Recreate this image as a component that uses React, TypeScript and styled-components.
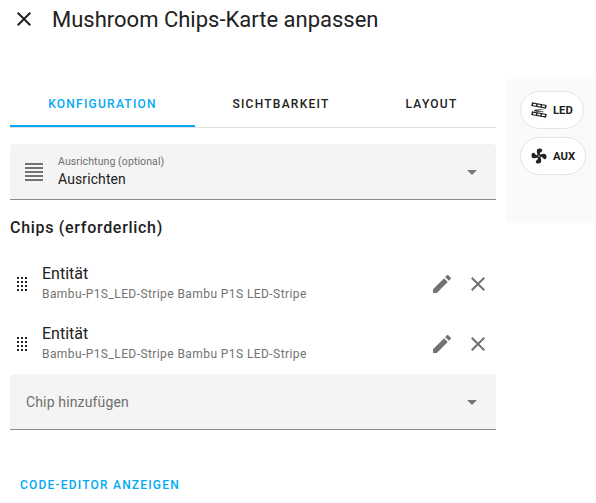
import styled, { createGlobalStyle } from 'styled-components';

const GlobalStyle = createGlobalStyle`
  html, body {
    margin: 0;
    padding: 0;
    background: #fff;
    overflow: hidden;
  }
  body {
    font-family: Roboto, "Liberation Sans", sans-serif;
    color: #212121;
  }
`;

const Dialog = styled.div`
  width: 596px;
  height: 503px;
  overflow: hidden;
`;

const Header = styled.header`
  display: flex;
  align-items: center;
  height: 38px;
  padding-left: 12px;
`;

const CloseButton = styled.div`
  display: flex;
  width: 24px;
  height: 24px;
  color: #212121;
`;

const Title = styled.h1`
  margin: 0 0 0 16px;
  font-size: 22px;
  font-weight: 400;
  color: #212121;
`;

const Content = styled.div`
  display: flex;
  align-items: flex-start;
  padding: 41px 0 0 10px;
`;

const Editor = styled.div`
  display: flex;
  flex-direction: column;
  width: 486px;
`;

const Tabs = styled.div`
  display: flex;
  height: 48px;
  border-bottom: 1px solid #e0e0e0;
`;

const Tab = styled.div<{ $active?: boolean; $width: number }>`
  display: flex;
  align-items: center;
  justify-content: center;
  box-sizing: border-box;
  width: ${(p) => p.$width}px;
  height: 48px;
  padding-top: 4px;
  font-size: 12px;
  font-weight: 500;
  letter-spacing: 1.25px;
  color: ${(p) => (p.$active ? '#03a9f4' : '#212121')};
  border-bottom: 2px solid ${(p) => (p.$active ? '#03a9f4' : 'transparent')};
`;

const SelectBox = styled.div<{ $top: number }>`
  display: flex;
  align-items: center;
  box-sizing: border-box;
  height: 56px;
  margin-top: ${(p) => p.$top}px;
  padding: 0 16px;
  background: #f4f4f4;
  border-bottom: 1px solid #8a8a8a;
  border-radius: 4px 4px 0 0;
`;

const LeadingIcon = styled.div`
  display: flex;
  width: 24px;
  height: 24px;
  margin: 0 12px 0 -4px;
  color: #727272;
`;

const SelectText = styled.div`
  display: flex;
  flex: 1;
  flex-direction: column;
`;

const SelectLabel = styled.span`
  font-size: 10.5px;
  line-height: 14px;
  letter-spacing: 0.1px;
  color: #6f6f6f;
`;

const SelectValue = styled.span`
  font-size: 14px;
  line-height: 20px;
  letter-spacing: 0.1px;
  color: #212121;
`;

const AddLabel = styled.span`
  flex: 1;
  font-size: 14px;
  letter-spacing: 0.15px;
  color: #6f6f6f;
`;

const Arrow = styled.div`
  display: flex;
  width: 24px;
  height: 24px;
  margin-right: -4px;
  color: #757575;
`;

const Heading = styled.h3`
  margin: 18px 0 0;
  font-size: 16px;
  line-height: 20px;
  font-weight: 500;
  letter-spacing: 0.7px;
  color: #212121;
`;

const ChipList = styled.div`
  display: flex;
  flex-direction: column;
  margin-top: 16px;
`;

const ChipRow = styled.div`
  display: flex;
  align-items: center;
  height: 60px;
`;

const DragHandle = styled.div`
  display: flex;
  width: 24px;
  height: 24px;
  color: #212121;
`;

const ChipText = styled.div`
  display: flex;
  flex: 1;
  flex-direction: column;
  margin: 0 0 2px 8px;
`;

const ChipName = styled.span`
  font-size: 16px;
  line-height: 22px;
  color: #212121;
`;

const ChipEntity = styled.span`
  font-size: 12px;
  line-height: 18px;
  letter-spacing: 0.42px;
  color: #727272;
`;

const RowActions = styled.div`
  display: flex;
  gap: 12px;
  margin-right: 6px;
`;

const RowAction = styled.div`
  display: flex;
  width: 24px;
  height: 24px;
  color: #727272;
`;

const CodeButton = styled.div`
  margin: 47px 0 0 10px;
  font-size: 12px;
  line-height: 16px;
  font-weight: 500;
  letter-spacing: 1.2px;
  color: #03a9f4;
`;

const Preview = styled.aside`
  display: flex;
  flex-direction: column;
  align-items: flex-start;
  gap: 8px;
  box-sizing: border-box;
  width: 90px;
  height: 144px;
  margin-left: 10px;
  padding: 12px 0 0 14px;
  background: #fafafa;
  border-radius: 4px 0 0 4px;
`;

const PreviewChip = styled.div`
  display: flex;
  align-items: center;
  gap: 5px;
  box-sizing: border-box;
  height: 38px;
  padding: 0 10px 0 9px;
  background: #fff;
  border: 1px solid #e4e4e4;
  border-radius: 19px;
  font-size: 11.3px;
  font-weight: 700;
  color: #212121;
`;

const ChipIcon = styled.div`
  display: flex;
  width: 18px;
  height: 18px;
  color: #212121;
`;

const Icon = ({ d }: { d: string }) => (
  <svg width="100%" height="100%" viewBox="0 0 24 24" fill="currentColor">
    <path d={d} />
  </svg>
);

const closePath =
  'M19,6.41L17.59,5L12,10.59L6.41,5L5,6.41L10.59,12L5,17.59L6.41,19L12,13.41L17.59,19L19,17.59L13.41,12L19,6.41Z';
const pencilPath =
  'M20.71,7.04C21.1,6.65 21.1,6 20.71,5.63L18.37,3.29C18,2.9 17.35,2.9 16.96,3.29L15.12,5.12L18.87,8.87M3,17.25V21H6.75L17.81,9.93L14.06,6.18L3,17.25Z';
const dragPath =
  'M7,19V17H9V19H7M11,19V17H13V19H11M15,19V17H17V19H15M7,15V13H9V15H7M11,15V13H13V15H11M15,15V13H17V15H15M7,11V9H9V11H7M11,11V9H13V11H11M15,11V9H17V11H15M7,7V5H9V7H7M11,7V5H13V7H11M15,7V5H17V7H15Z';
const justifyPath = 'M3,3H21V5H3V3M3,7H21V9H3V7M3,11H21V13H3V11M3,15H21V17H3V15M3,19H21V21H3V19Z';
const menuDownPath = 'M7,10L12,15L17,10H7Z';
const fanPath =
  'M12,11A1,1 0 0,0 11,12A1,1 0 0,0 12,13A1,1 0 0,0 13,12A1,1 0 0,0 12,11M12.5,2C17,2 17.11,5.57 14.75,6.75C13.76,7.24 13.32,8.29 13.13,9.22C13.61,9.42 14.03,9.73 14.35,10.13C18.05,8.13 22.03,8.92 22.03,12.5C22.03,17 18.46,17.1 17.28,14.73C16.78,13.74 15.72,13.3 14.79,13.11C14.59,13.59 14.28,14 13.88,14.34C15.87,18.03 15.08,22 11.5,22C7,22 6.91,18.42 9.27,17.24C10.25,16.75 10.69,15.71 10.89,14.79C10.4,14.59 9.97,14.27 9.65,13.87C5.96,15.85 2,15.07 2,11.5C2,7 5.56,6.89 6.74,9.26C7.24,10.25 8.29,10.68 9.22,10.87C9.41,10.39 9.73,9.97 10.14,9.65C8.15,5.96 8.94,2 12.5,2Z';

// two slanted strips joined by a short wire, with the led squares cut out
const LedStrip = () => (
  <svg width="100%" height="100%" viewBox="0 0 24 24">
    <g transform="rotate(10 12 6)">
      <rect x="2" y="3.5" width="20" height="5" fill="#212121" />
      <rect x="4" y="5" width="4" height="2" fill="#fff" />
      <rect x="10" y="5" width="4" height="2" fill="#fff" />
      <rect x="16" y="5" width="4" height="2" fill="#fff" />
    </g>
    <path d="M20,10.5L6,11.5L5,13L18,14L18,15L6,14Z" fill="#212121" />
    <g transform="rotate(10 12 18)">
      <rect x="2" y="15.5" width="20" height="5" fill="#212121" />
      <rect x="4" y="17" width="4" height="2" fill="#fff" />
      <rect x="10" y="17" width="4" height="2" fill="#fff" />
      <rect x="16" y="17" width="4" height="2" fill="#fff" />
    </g>
  </svg>
);

const ENTITY_LABEL = 'Bambu-P1S_LED-Stripe Bambu P1S LED-Stripe';

const App = () => (
  <Dialog>
    <GlobalStyle />
    <Header>
      <CloseButton>
        <Icon d={closePath} />
      </CloseButton>
      <Title>Mushroom Chips-Karte anpassen</Title>
    </Header>
    <Content>
      <Editor>
        <Tabs>
          <Tab $active $width={185}>
            KONFIGURATION
          </Tab>
          <Tab $width={172}>SICHTBARKEIT</Tab>
          <Tab $width={129}>LAYOUT</Tab>
        </Tabs>
        <SelectBox $top={16}>
          <LeadingIcon>
            <Icon d={justifyPath} />
          </LeadingIcon>
          <SelectText>
            <SelectLabel>Ausrichtung (optional)</SelectLabel>
            <SelectValue>Ausrichten</SelectValue>
          </SelectText>
          <Arrow>
            <Icon d={menuDownPath} />
          </Arrow>
        </SelectBox>
        <Heading>Chips (erforderlich)</Heading>
        <ChipList>
          {[0, 1].map((i) => (
            <ChipRow key={i}>
              <DragHandle>
                <Icon d={dragPath} />
              </DragHandle>
              <ChipText>
                <ChipName>Entität</ChipName>
                <ChipEntity>{ENTITY_LABEL}</ChipEntity>
              </ChipText>
              <RowActions>
                <RowAction>
                  <Icon d={pencilPath} />
                </RowAction>
                <RowAction>
                  <Icon d={closePath} />
                </RowAction>
              </RowActions>
            </ChipRow>
          ))}
        </ChipList>
        <SelectBox $top={0}>
          <AddLabel>Chip hinzufügen</AddLabel>
          <Arrow>
            <Icon d={menuDownPath} />
          </Arrow>
        </SelectBox>
        <CodeButton>CODE-EDITOR ANZEIGEN</CodeButton>
      </Editor>
      <Preview>
        <PreviewChip>
          <ChipIcon>
            <LedStrip />
          </ChipIcon>
          LED
        </PreviewChip>
        <PreviewChip>
          <ChipIcon>
            <Icon d={fanPath} />
          </ChipIcon>
          AUX
        </PreviewChip>
      </Preview>
    </Content>
  </Dialog>
);

export default App;
